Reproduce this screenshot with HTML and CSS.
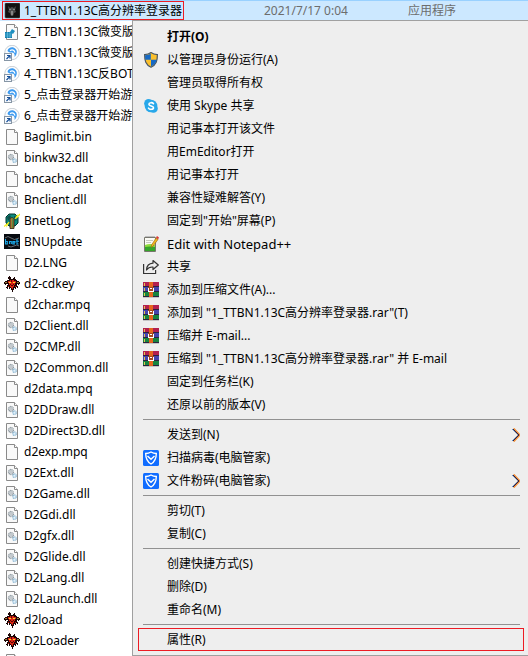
FILE: index.html
```html
<!DOCTYPE html>
<html lang="zh-CN">
<head>
<meta charset="utf-8">
<meta name="viewport" content="width=device-width, initial-scale=1">
<title>文件列表</title>
<link rel="stylesheet" href="styles.css">
</head>
<body>
<svg class="sprite" aria-hidden="true">
  <symbol id="i-blank" viewBox="0 0 16 16">
    <path d="M2.5.5h8l3 3v12h-11z" fill="#f9f9f9" stroke="#8a8a8a"/>
    <path d="M10.5.5v3h3" fill="#fff" stroke="#8a8a8a"/>
  </symbol>
  <symbol id="i-dll" viewBox="0 0 16 16">
    <path d="M2.5.5h8l3 3v12h-11z" fill="#f9f9f9" stroke="#8a8a8a"/>
    <path d="M10.5.5v3h3" fill="#fff" stroke="#8a8a8a"/>
    <circle cx="7" cy="7" r="2.4" fill="#e9edf0" stroke="#929ca3" stroke-width="1.5" stroke-dasharray="1.1 .4"/>
    <circle cx="7" cy="7" r="1" fill="#fff" stroke="#929ca3" stroke-width=".6"/>
    <circle cx="10.500" cy="10.700" r="1.700" fill="#e3f1fa" stroke="#8fb9d4" stroke-width="1.400" stroke-dasharray="1 .4"/>
  </symbol>
  <symbol id="i-game" viewBox="0 0 16 16">
    <rect x="1" y="0" width="15" height="15" rx="1" fill="#101010" stroke="#555" stroke-width=".6"/>
    <path d="M4 3l2 2 2-1 2 1 2-2-1 4 1 2-2 1-1 3H7l-1-3-2-1 1-2z" fill="#4c4c4c"/>
    <path d="M5 6h2v1H5zM9 6h2v1H9zM7 8h2v4H7z" fill="#858585"/>
  </symbol>
  <symbol id="i-reg" viewBox="0 0 16 16">
    <path d="M2.500.5h8l3 3v12h-11z" fill="#fafafa" stroke="#8a8a8a"/>
    <path d="M10.500.5v3h3" fill="#fff" stroke="#8a8a8a"/>
    <path d="M1 8h7v6H1z" fill="#147fb0"/>
    <path d="M3.500 8v6M6 8v6M1 10h7M1 12h7" stroke="#6cc6e4" stroke-width=".6"/>
    <path d="M8 5l3 2-2 3-3-2z" fill="#1e8fc0"/>
  </symbol>
  <symbol id="i-link" viewBox="0 0 16 16">
    <circle cx="8" cy="7.500" r="7.200" fill="#fbfcfd" stroke="#bcc4cb" stroke-width=".8"/>
    <path d="M3.500 6C4 3 7 1.800 9.500 2.500 13.500 4 14 8.500 10.500 12c.5-3-.3-4.300-2.500-4.500C6 7.600 4.800 7.200 3.500 6z" fill="#3c9af0"/>
    <path d="M6 5.800c2-1.600 4.500-.8 5 1.800" fill="none" stroke="#fff" stroke-width="1.200"/>
    <rect x=".5" y="8.500" width="7" height="7" fill="#f8fbff" stroke="#8796a5"/>
    <path d="M3 10.500h3v3M5.800 10.700L2.500 14" fill="none" stroke="#164f98" stroke-width="1.200"/>
  </symbol>
  <symbol id="i-bnet" viewBox="0 0 16 16">
    <path d="M5 1h6l3 3v6l-3 3H5l-3-3V4z" fill="#0b8a7c" stroke="#04352f"/>
    <path d="M3 4l3-2 1 2-3 4zM10 3l3 1-1 4-2-2z" fill="#0c4f4a"/>
    <path d="M6 15.500V6.500c0-2.500 4-2.500 4 0v9z" fill="#a9783a" stroke="#2c1e0a" stroke-width=".8"/>
    <path d="M8.500 5v10" stroke="#5f8a3a"/>
    <path d="M0 13.500L3 11l0 1.500L5 9M11 6l2-3v1.500L16 1" fill="none" stroke="#f4ee20" stroke-width="1.200"/>
  </symbol>
  <symbol id="i-update" viewBox="0 0 16 16">
    <path d="M0 0h16v15H0z" fill="#070b10"/>
    <path d="M1 4q3-3 6 0t8 0M4 12q3 2 6 0t5 0" fill="none" stroke="#80878c" stroke-width=".8"/>
    <path d="M1.500 5v5h1.800V7.500H1.500M5.500 10V7.500h1.800V10M11 8.800H8.800V7.500H11v1.200M8.800 9v1H11M13 5v5h1.500M12 7.300h3" fill="none" stroke="#1ba8e8" stroke-width="1.100"/>
  </symbol>
  <symbol id="i-devil" viewBox="0 0 16 16" shape-rendering="crispEdges">
    <path d="M5 0h1v1h1v2h2V2h1V1h1v2h1v1h1v1h2v1h1v2h-1v1h-1V8h-1v2h1v2h-1v-1h-1v2h-1v-1h-1v2H9v2H8v-2H7v-2H6v1H5v-2H4v2H3v-1H2v-1h1V9h1V8H2v1H1V8H0V6h1V5h2V4h2V3H4V1h1z" fill="#1c0505"/>
    <path d="M6 4h4v1h2v2h-1v2h-1v2H9v1H7v-1H6V9H5V7H4V5h2z" fill="#da2414"/>
    <path d="M1 6h2v1H1zM13 6h2v1h-2z" fill="#9a813f"/>
    <path d="M5 6h2v1H5zM9 6h2v1H9z" fill="#ffd92b"/>
    <path d="M7 4h1v2H7zM6 8h1v1H6zM9 8h1v1H9zM7 9h2v1H7z" fill="#5d0804"/>
    <path d="M4 10h1v1H4zM11 10h1v1h-1zM8 12h1v1H8z" fill="#d02416"/>
  </symbol>
  <symbol id="i-shield" viewBox="0 0 16 16">
    <path d="M8 .6C6 2.100 4 2.600 1.600 2.600c0 6 1 10 6.400 12.600 5.400-2.600 6.400-6.600 6.400-12.600C12 2.600 10 2.100 8 .6z" fill="#fbc02d" stroke="#4a5663" stroke-width="1.200"/>
    <path d="M7.800 1.400v6.400H2.300C2 6 2 4.500 2.100 3.200 4.500 3 6 2.600 7.800 1.400zM8 7.800h5.700c-.7 3.200-2.400 5.300-5.700 6.800z" fill="#1769c4"/>
  </symbol>
  <symbol id="i-skype" viewBox="0 0 16 16">
    <circle cx="5.500" cy="5.300" r="4.300" fill="#28a8ea"/><circle cx="10.500" cy="10.500" r="4.300" fill="#28a8ea"/>
    <circle cx="8" cy="8" r="6.300" fill="#28a8ea"/>
    <path d="M10.500 5.700C9.500 4.200 5.900 4.300 5.900 6.200c0 2.200 4.600 1.300 4.600 3.500 0 2-3.900 2.200-5 .4" fill="none" stroke="#fff" stroke-width="1.600" stroke-linecap="round"/>
  </symbol>
  <symbol id="i-notepad" viewBox="0 0 16 16">
    <path d="M1.500 1.500h11v14h-11z" fill="#fbfbf5" stroke="#77776c"/>
    <path d="M2 9q5-2 10 0v6H2z" fill="#8fdc3c"/><path d="M2 11q5-1 10 0v4H2z" fill="#35a52a"/>
    <path d="M3 4.500h7M3 6.500h5" stroke="#b9bcb1" stroke-width=".8"/>
    <path d="M3 0v2M5 0v2M7 0v2M9 0v2M11 0v2" stroke="#777" stroke-width=".8"/>
    <path d="M13 2L8.500 9 8 11.500 10.200 10 15 3.500z" fill="#f2b51e" stroke="#8e6412" stroke-width=".6"/>
    <path d="M13 1.500l1-1.500 2 1.500-1 2z" fill="#db3a34"/>
  </symbol>
  <symbol id="i-share" viewBox="0 0 16 16">
    <path d="M.6 5v9.500h12V11" fill="none" stroke="#333" stroke-width="1.200"/>
    <path d="M10 1.500L15.300 6 10 10.500V8C7 7.800 5 8.800 3.500 11 3.700 7 6 4.500 10 4.200z" fill="none" stroke="#333" stroke-width="1.200" stroke-linejoin="round"/>
  </symbol>
  <symbol id="i-rar" viewBox="0 0 16 16" shape-rendering="crispEdges">
    <path d="M0 0h16v5H0z" fill="#b3204f"/><path d="M0 5h16v5H0z" fill="#4544ad"/><path d="M0 10h16v5H0z" fill="#17843f"/>
    <path d="M0 4h16v1H0zM0 9h16v1H0zM0 14h16v1H0z" fill="#2c2340"/>
    <path d="M0 15h16v1H0z" fill="#c6c6c6"/>
    <path d="M1 1h1v3H1zM1 6h1v3H1zM1 11h1v3H1z" fill="#e2c64e"/>
    <path d="M6 0h4v15H6z" fill="#e5651c"/>
    <path d="M5 5h6v5H5z" fill="#a44a22"/>
    <path d="M5 6h1v3h4V6h1v4H5zM7 6h2v1H7z" fill="#fff"/>
  </symbol>
  <symbol id="i-guard" viewBox="0 0 16 16">
    <rect width="16" height="16" rx="1.500" fill="#116dff"/>
    <path d="M8 2C6.200 3.100 4.500 3.500 2.700 3.500c0 5 1 8 5.300 10.500 4.300-2.500 5.300-5.500 5.300-10.500C11.500 3.500 9.800 3.100 8 2z" fill="none" stroke="#fff" stroke-width="1.400"/>
    <path d="M4.500 6L8 9.200 11.500 6" fill="none" stroke="#fff" stroke-width="1.500"/>
  </symbol>
</svg>

<main class="window">
  <table class="files" aria-label="文件">
    <colgroup><col class="col-name"><col class="col-date"><col></colgroup>
    <tbody>
      <tr class="selected"><td><span class="file marked"><svg><use href="#i-game"/></svg>1_TTBN1.13C高分辨率登录器</span></td><td>2021/7/17 0:04</td><td>应用程序</td></tr>
      <tr><td><span class="file"><svg><use href="#i-reg"/></svg>2_TTBN1.13C微变版</span></td></tr>
      <tr><td><span class="file"><svg><use href="#i-link"/></svg>3_TTBN1.13C微变版</span></td></tr>
      <tr><td><span class="file"><svg><use href="#i-link"/></svg>4_TTBN1.13C反BOT</span></td></tr>
      <tr><td><span class="file"><svg><use href="#i-link"/></svg>5_点击登录器开始游</span></td></tr>
      <tr><td><span class="file"><svg><use href="#i-link"/></svg>6_点击登录器开始游</span></td></tr>
      <tr><td><span class="file"><svg><use href="#i-blank"/></svg>Baglimit.bin</span></td></tr>
      <tr><td><span class="file"><svg><use href="#i-dll"/></svg>binkw32.dll</span></td></tr>
      <tr><td><span class="file"><svg><use href="#i-blank"/></svg>bncache.dat</span></td></tr>
      <tr><td><span class="file"><svg><use href="#i-dll"/></svg>Bnclient.dll</span></td></tr>
      <tr><td><span class="file"><svg><use href="#i-bnet"/></svg>BnetLog</span></td></tr>
      <tr><td><span class="file"><svg><use href="#i-update"/></svg>BNUpdate</span></td></tr>
      <tr><td><span class="file"><svg><use href="#i-blank"/></svg>D2.LNG</span></td></tr>
      <tr><td><span class="file"><svg><use href="#i-devil"/></svg>d2-cdkey</span></td></tr>
      <tr><td><span class="file"><svg><use href="#i-blank"/></svg>d2char.mpq</span></td></tr>
      <tr><td><span class="file"><svg><use href="#i-dll"/></svg>D2Client.dll</span></td></tr>
      <tr><td><span class="file"><svg><use href="#i-dll"/></svg>D2CMP.dll</span></td></tr>
      <tr><td><span class="file"><svg><use href="#i-dll"/></svg>D2Common.dll</span></td></tr>
      <tr><td><span class="file"><svg><use href="#i-blank"/></svg>d2data.mpq</span></td></tr>
      <tr><td><span class="file"><svg><use href="#i-dll"/></svg>D2DDraw.dll</span></td></tr>
      <tr><td><span class="file"><svg><use href="#i-dll"/></svg>D2Direct3D.dll</span></td></tr>
      <tr><td><span class="file"><svg><use href="#i-blank"/></svg>d2exp.mpq</span></td></tr>
      <tr><td><span class="file"><svg><use href="#i-dll"/></svg>D2Ext.dll</span></td></tr>
      <tr><td><span class="file"><svg><use href="#i-dll"/></svg>D2Game.dll</span></td></tr>
      <tr><td><span class="file"><svg><use href="#i-dll"/></svg>D2Gdi.dll</span></td></tr>
      <tr><td><span class="file"><svg><use href="#i-dll"/></svg>D2gfx.dll</span></td></tr>
      <tr><td><span class="file"><svg><use href="#i-dll"/></svg>D2Glide.dll</span></td></tr>
      <tr><td><span class="file"><svg><use href="#i-dll"/></svg>D2Lang.dll</span></td></tr>
      <tr><td><span class="file"><svg><use href="#i-dll"/></svg>D2Launch.dll</span></td></tr>
      <tr><td><span class="file"><svg><use href="#i-devil"/></svg>d2load</span></td></tr>
      <tr><td><span class="file"><svg><use href="#i-devil"/></svg>D2Loader</span></td></tr>
      <tr><td><span class="file"><svg><use href="#i-dll"/></svg></span></td></tr>
    </tbody>
  </table>

  <div class="menu" role="menu">
    <button class="item default" role="menuitem"><svg></svg>打开(O)</button>
    <button class="item" role="menuitem"><svg><use href="#i-shield"/></svg>以管理员身份运行(A)</button>
    <button class="item" role="menuitem"><svg></svg>管理员取得所有权</button>
    <button class="item" role="menuitem"><svg><use href="#i-skype"/></svg>使用 Skype 共享</button>
    <button class="item" role="menuitem"><svg></svg>用记事本打开该文件</button>
    <button class="item" role="menuitem"><svg></svg>用EmEditor打开</button>
    <button class="item" role="menuitem"><svg></svg>用记事本打开</button>
    <button class="item" role="menuitem"><svg></svg>兼容性疑难解答(Y)</button>
    <button class="item" role="menuitem"><svg></svg>固定到"开始"屏幕(P)</button>
    <button class="item latin" role="menuitem"><svg><use href="#i-notepad"/></svg>Edit with Notepad++</button>
    <button class="item" role="menuitem"><svg><use href="#i-share"/></svg>共享</button>
    <button class="item" role="menuitem"><svg><use href="#i-rar"/></svg>添加到压缩文件(A)...</button>
    <button class="item" role="menuitem"><svg><use href="#i-rar"/></svg>添加到 "1_TTBN1.13C高分辨率登录器.rar"(T)</button>
    <button class="item" role="menuitem"><svg><use href="#i-rar"/></svg>压缩并 E-mail...</button>
    <button class="item" role="menuitem"><svg><use href="#i-rar"/></svg>压缩到 "1_TTBN1.13C高分辨率登录器.rar" 并 E-mail</button>
    <button class="item" role="menuitem"><svg></svg>固定到任务栏(K)</button>
    <button class="item" role="menuitem"><svg></svg>还原以前的版本(V)</button>
    <hr>
    <button class="item" role="menuitem" aria-haspopup="true"><svg></svg>发送到(N)<svg class="arrow" viewBox="0 0 8 14"><path class="cool" d="M0 1l6 6-6 6"/><path class="warm" d="M1.500.5L7.500 7l-6 6.500"/><path d="M1 1l6 6-6 6"/></svg></button>
    <button class="item" role="menuitem"><svg><use href="#i-guard"/></svg>扫描病毒(电脑管家)</button>
    <button class="item" role="menuitem" aria-haspopup="true"><svg><use href="#i-guard"/></svg>文件粉碎(电脑管家)<svg class="arrow" viewBox="0 0 8 14"><path class="cool" d="M0 1l6 6-6 6"/><path class="warm" d="M1.500.5L7.500 7l-6 6.500"/><path d="M1 1l6 6-6 6"/></svg></button>
    <hr>
    <button class="item" role="menuitem"><svg></svg>剪切(T)</button>
    <button class="item" role="menuitem"><svg></svg>复制(C)</button>
    <hr>
    <button class="item" role="menuitem"><svg></svg>创建快捷方式(S)</button>
    <button class="item" role="menuitem"><svg></svg>删除(D)</button>
    <button class="item" role="menuitem"><svg></svg>重命名(M)</button>
    <hr>
    <button class="item marked" role="menuitem"><svg></svg>属性(R)</button>
  </div>
</main>
</body>
</html>
```
FILE: styles.css
```css
* {
  box-sizing: border-box;
}

body {
  margin: 0;
  background: #fff;
  color: #000;
  font: 12px/18px "Noto Sans", "Noto Sans CJK SC", sans-serif;
}

.sprite {
  position: absolute;
  width: 0;
  height: 0;
}

.window {
  position: relative;
  height: 100vh;
  overflow: hidden;
}

.files {
  width: 100%;
  table-layout: fixed;
  border-collapse: collapse;
}

.col-name {
  width: 264px;
}

.col-date {
  width: 144px;
}

.files tr {
  height: 21px;
}

.files td {
  padding: 0;
  color: #6d6d6d;
  white-space: nowrap;
  vertical-align: top;
  line-height: 21px;
}

.selected {
  background: #cce8ff;
  box-shadow: inset 0 1px #99d1ff;
}

.file {
  display: flex;
  align-items: center;
  gap: 4px;
  width: max-content;
  height: 19px;
  margin: 1px 2px;
  padding: 0 2px;
  color: #000;
}

.file svg,
.item svg {
  flex: none;
  width: 16px;
  height: 16px;
}

.file.marked {
  padding: 0 1px;
  border: 1px solid #ed1c24;
}

.menu {
  position: absolute;
  top: 20px;
  right: 0;
  left: 132px;
  padding: 4px 0;
  border: 1px solid #a0a0a0;
  border-right: 0;
  background: #eee;
}

.item {
  display: flex;
  align-items: center;
  gap: 8px;
  width: 100%;
  height: 23px;
  padding: 0 8px 0 10px;
  border: 0;
  background: none;
  color: #000;
  font: inherit;
  text-align: left;
  white-space: nowrap;
}

.item.default {
  font-weight: 700;
}

.item.latin {
  font-size: 13px;
}

.item.marked {
  width: auto;
  min-width: calc(100% - 9px);
  margin: 0 4px 0 5px;
  padding: 0 4px;
  border: 1px solid #ed1c24;
}

.item .arrow {
  width: 8px;
  height: 14px;
  margin-left: auto;
  fill: none;
  stroke: #3a1d3c;
}

.arrow .cool {
  stroke: #5a9ad8;
}

.arrow .warm {
  stroke: #f0923c;
  stroke-width: 2;
}

.menu hr {
  height: 1px;
  margin: 3px 8px 3px 10px;
  border: 0;
  background: #919191;
}
```
